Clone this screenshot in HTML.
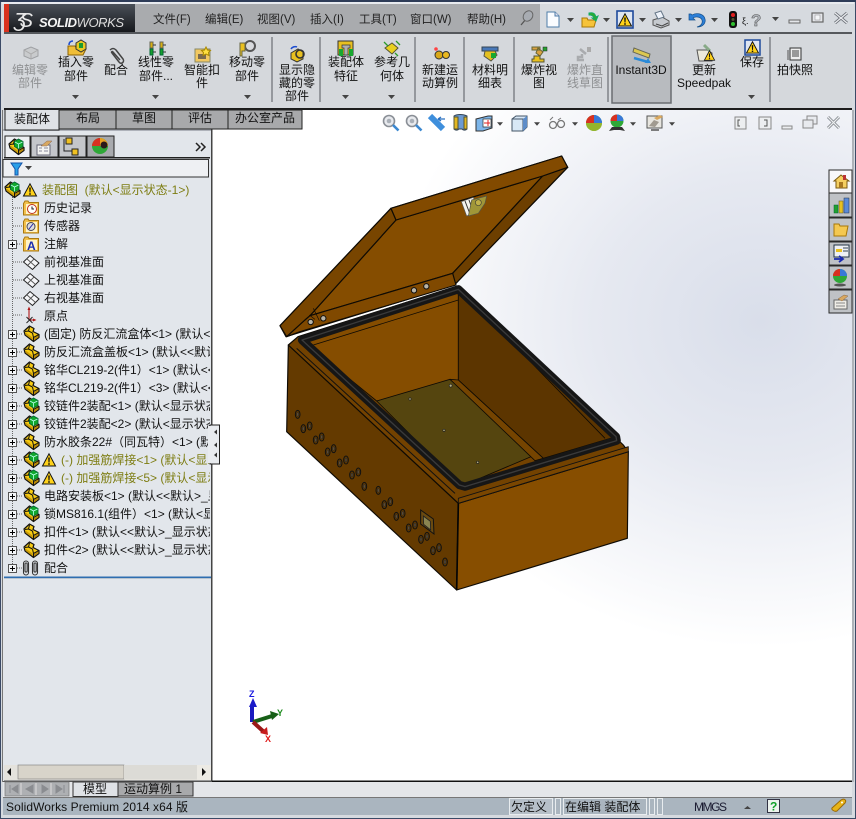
<!DOCTYPE html>
<html><head><meta charset="utf-8"><title>SolidWorks</title>
<style>
html,body{margin:0;padding:0;background:#d8dce2;width:856px;height:819px;overflow:hidden}
svg{display:block;position:absolute;left:0;top:0}
text{font-family:"Liberation Sans","Noto Sans CJK SC",sans-serif;font-size:12px;fill:#111}
.c{text-anchor:middle}
.g{fill:#8e9092}
.m{font-size:11.5px;fill:#222}
.w{fill:#7d7d12}
</style></head><body>
<svg width="856" height="819" viewBox="0 0 856 819" xmlns="http://www.w3.org/2000/svg">
<defs>
<radialGradient id="gv" gradientUnits="userSpaceOnUse" cx="760" cy="320" r="370" gradientTransform="translate(0 40) scale(1 .88)"><stop offset="0" stop-color="#d9deea"/><stop offset=".45" stop-color="#e6e9f1"/><stop offset="1" stop-color="#ffffff"/></radialGradient>
<linearGradient id="log" x1="0" y1="0" x2="0" y2="1"><stop offset="0" stop-color="#4a5058"/><stop offset="1" stop-color="#16181c"/></linearGradient>
<clipPath id="tc"><rect x="3" y="180" width="207" height="396"/></clipPath>
<symbol id="part" viewBox="0 0 17 17" overflow="visible"><path d="M1 6 6.500 1 11 3.500 10 6.500 16 9.500 16 12.500 10.500 16.500 2 10Z" fill="#f6cb14" stroke="#111" stroke-width="1.200" stroke-linejoin="round"/><path d="M6.500 2 5.500 6 9.500 8M2 6.500 5.500 6M9.500 8 10.500 12.500 16 9.500M10.500 12.500V16" fill="none" stroke="#111" stroke-width="1"/><path d="M2.500 7.500 9.800 12.800V15L2.500 9.700Z" fill="#c99a08"/><path d="M11 13 15.500 10.300V12.300L11 15.500Z" fill="#b98a08"/></symbol>
<symbol id="asm" viewBox="0 0 17 17" overflow="visible"><use href="#part" width="17" height="17"/><path d="M6.500 3.500 10.500 1 15 3.500V8.500L10.500 11 6.500 8.500Z" fill="#10a82c" stroke="#063" stroke-width=".9"/><path d="M7 4 10.500 6 14.500 4M10.500 6V10.500" fill="none" stroke="#bfe" stroke-width=".8"/></symbol>
<symbol id="warn" viewBox="0 0 14 14" overflow="visible"><path d="M7 .8 13.500 13H.5Z" fill="#ffd21a" stroke="#111" stroke-width="1"/><path d="M6.200 4.500h1.600L7.500 9.500h-1ZM6.200 10.300h1.600v1.500H6.200Z" fill="#111"/></symbol>
<symbol id="plus" viewBox="0 0 9 9"><rect x=".5" y=".5" width="8" height="8" fill="#f4f6f8" stroke="#555"/><path d="M2 4.500h5M4.500 2v5" stroke="#000"/></symbol>
<symbol id="plane" viewBox="0 0 17 17" overflow="visible"><path d="M.5 8 7 1.500 16 9 9.500 15.500Z" fill="#f6f7f9" stroke="#222"/><path d="M3.500 4.500 12.500 12.500M4 12 11 5" stroke="#555" stroke-width=".9" fill="none"/></symbol>
<symbol id="folder" viewBox="0 0 16 16" overflow="visible"><path d="M.5 3.500V15h15V2.500H6L5 1H2Z" fill="#f2c04c" stroke="#a97810"/><rect x="3" y="4" width="11" height="10" fill="#fff3c8"/></symbol>
<symbol id="mag" viewBox="0 0 18 18" overflow="visible"><circle cx="7" cy="7" r="5.500" fill="#e8eaee" stroke="#8a8f96" stroke-width="1.600"/><circle cx="7" cy="7" r="2.300" fill="#aab0b8"/><path d="M11 11 16.500 16.500" stroke="#3c88d0" stroke-width="2.600"/></symbol>
<symbol id="dd" viewBox="0 0 7 4"><path d="M0 0H7L3.500 4Z" fill="#444"/></symbol>
<symbol id="hole" viewBox="0 0 20 30" overflow="visible"><ellipse cx="10" cy="15" rx="7" ry="12" fill="#5f3800" stroke="#111" stroke-width="3"/><ellipse cx="10" cy="15" rx="3" ry="6" fill="#5a4c38" stroke="#222" stroke-width="1.500"/></symbol>
</defs>

<!-- window frame -->
<rect width="856" height="819" fill="#3b4a66"/>
<rect x="1" y="1" width="854" height="817" fill="#d6dadf"/>
<rect x="0" y="0" width="856" height="2" fill="#2e3c58"/>
<rect x="2" y="2" width="852" height="2" fill="#e8ebef"/>

<!-- title bar -->
<rect x="4" y="4" width="848" height="28" fill="#d6dadf"/>
<rect x="135" y="4" width="405" height="28" fill="#a9abae"/>
<rect x="4" y="4" width="131" height="28" fill="url(#log)"/>
<rect x="4" y="4" width="5" height="28" fill="#d8321e"/>
<text x="14" y="27" style="font-size:20px;font-style:italic;fill:#e8e8e8" textLength="19">ƷS</text>
<text x="39" y="27" style="font-size:13px;font-style:italic;fill:#f0f0f0" textLength="85"><tspan style="font-weight:bold;fill:#f4f4f4">SOLID</tspan><tspan style="fill:#dcdcdc">WORKS</tspan></text>
<text x="153" y="23" class="m">文件(F)</text><text x="205" y="23" class="m">编辑(E)</text><text x="257" y="23" class="m">视图(V)</text><text x="310" y="23" class="m">插入(I)</text><text x="359" y="23" class="m">工具(T)</text><text x="410" y="23" class="m">窗口(W)</text><text x="467" y="23" class="m">帮助(H)</text>
<!-- pushpin -->
<path d="M521 25 526 19" stroke="#555" stroke-width="1.300"/><ellipse cx="528" cy="16" rx="4.500" ry="5.500" transform="rotate(35 528 16)" fill="#a8acb2" stroke="#666"/>
<!-- quick icons -->
<path d="M547 12h8l4 4v11h-12Z" fill="#fafcff" stroke="#4f7da8"/><path d="M555 12v4h4" fill="#dde" stroke="#4f7da8"/>
<use href="#dd" x="567" y="18" width="7" height="4"/>
<path d="M582 18h5l1 2h8l-2 7h-12Z" fill="#f6c33a" stroke="#a87808"/><path d="M589 13c5-1 6 1 7 4l2-1-2 5-4-3 2 0c-1-2-2-3-5-3Z" fill="#2faa2f" stroke="#1a6"/>
<use href="#dd" x="603" y="18" width="7" height="4"/>
<rect x="617" y="11" width="16" height="17" fill="#dfe6f2" stroke="#1e4a9c" stroke-width="1.600"/><use href="#warn" x="618" y="13" width="14" height="14"/>
<use href="#dd" x="639" y="18" width="7" height="4"/>
<path d="M653 20l9-3 7 4v4l-8 3-8-3Z" fill="#c6cacf" stroke="#555"/><path d="M655 13l6-2 3 6-6 2Z" fill="#eef3fa" stroke="#678"/><path d="M656 24l6 2 6-3" stroke="#444" fill="none"/>
<use href="#dd" x="675" y="18" width="7" height="4"/>
<path d="M689 14v6h6l-2-2c3-2 8-1 9 2 1 3-1 6-5 7 6 0 9-4 8-8-1-5-8-7-13-4l-1-1Z" fill="#2c7fd8" stroke="#14508c" stroke-width=".7"/>
<use href="#dd" x="711" y="18" width="7" height="4"/>
<rect x="729" y="11" width="8" height="17" rx="3" fill="#111"/><circle cx="733" cy="15" r="2" fill="#e02020"/><circle cx="733" cy="19.500" r="1.500" fill="#553"/><circle cx="733" cy="24" r="2" fill="#30c030"/>
<text x="742" y="24" style="font-size:9px">ξ.</text>
<text x="751" y="26" style="font-size:17px;font-weight:bold;fill:#aeb3ba;stroke:#555;stroke-width:.5">?</text>
<use href="#dd" x="772" y="17" width="7" height="4"/>
<rect x="789" y="20" width="11" height="3" fill="#e4e6ea" stroke="#666"/>
<rect x="812" y="13" width="11" height="9" fill="#e4e6ea" stroke="#666" stroke-width="1.200"/><rect x="815" y="15" width="5" height="5" fill="#f4f6f8" stroke="#888" stroke-width=".5"/>
<path d="M835 13 847 23M847 13 835 23" stroke="#6a6f76" stroke-width="3"/><path d="M835 13 847 23M847 13 835 23" stroke="#e8eaee" stroke-width="1.300"/>

<!-- command manager -->
<rect x="4" y="32" width="848" height="2" fill="#55585c"/>
<rect x="4" y="34" width="848" height="74" fill="#d5d8dc"/>
<rect x="4" y="108" width="848" height="2" fill="#1c1c1c"/>
<path d="M272 37V102M320 37V102M415 37V102M464 37V102M514 37V102M608 37V102M770 37V102" stroke="#55595e" stroke-width="1"/>
<rect x="612" y="36" width="59" height="67" fill="#b8bbbf" stroke="#6a6d71" stroke-width="1.500"/>

<!-- command icons -->
<path d="M24 50 31 47 38 50V56L31 59 24 56Z" fill="#c9cbcd" stroke="#9ea0a3"/><path d="M24 50 31 54 38 50M31 54V59" stroke="#aaa" fill="none"/>
<path d="M68 46h7l2 3h9l-3 6H68Z" fill="#f0be38" stroke="#8a6206"/><path d="M76 43l5-3 5 3v6l-5 3-5-3Z" fill="#e8c820" stroke="#333"/><path d="M79 43h4v5h-4Z" fill="#1a9a30"/><path d="M69 45c0-3 2-4 4-4" stroke="#1c4cd0" fill="none" stroke-width="1.500"/>
<path d="M110 50c2-2 4-2 6 0l7 9c2 3-2 6-4 3l-7-9c-1-1 0-2 1-1l7 8" fill="none" stroke="#444" stroke-width="1.500"/>
<rect x="150" y="42" width="3" height="6" fill="#d8b010" stroke="#665"/><rect x="160" y="42" width="3" height="6" fill="#d8b010" stroke="#665"/><rect x="150" y="49" width="3" height="6" fill="#16a02c" stroke="#063"/><rect x="160" y="49" width="3" height="6" fill="#16a02c" stroke="#063"/><path d="M153 45h3M163 45h3M153 52h3M163 52h3" stroke="#333"/>
<rect x="195" y="49" width="15" height="13" fill="#f2c860" stroke="#886"/><rect x="198" y="54" width="8" height="5" fill="#7a6a50"/><path d="M206 47l1.500 3 3 .5-2 2 .5 3-3-1.500-3 1.500.5-3-2-2 3-.5Z" fill="#ffe040" stroke="#a80"/>
<circle cx="250" cy="46" r="5" fill="#d8dade" stroke="#555" stroke-width="2"/><path d="M240 43h5v8h-3v5h-2Z" fill="#eac020" stroke="#664"/>
<path d="M291 53l7-4 5 3v7l-6 3-6-3Z" fill="#e8c020" stroke="#333"/><circle cx="300" cy="54" r="4" fill="none" stroke="#333" stroke-width="1.600"/><path d="M291 49c1-2 4-3 6-2" stroke="#1c4cd0" fill="none" stroke-width="1.500"/>
<rect x="338" y="41" width="15" height="14" fill="#e8c020" stroke="#333"/><rect x="339" y="49" width="4" height="7" fill="#18a830"/><rect x="349" y="49" width="4" height="7" fill="#18a830"/><path d="M342 45h8v3h-2v7h-4v-7h-2Z" fill="#b0b0b0" stroke="#333" stroke-width=".7"/>
<path d="M385 48 392 43 398 48 392 54Z" fill="#e8d020" stroke="#553"/><path d="M384 42 388 46M395 53 398 56M396 41 400 45" stroke="#2a9a2a" stroke-width="1.300"/>
<circle cx="439" cy="55" r="4" fill="#d9a818" stroke="#333"/><circle cx="446" cy="55" r="3.500" fill="#e8b820" stroke="#333"/><circle cx="436" cy="49" r="1.800" fill="#f44"/>
<rect x="482" y="47" width="16" height="4" fill="#4878b8" stroke="#345"/><path d="M485 51h10l2 4-6 6-7-5Z" fill="#e4c020" stroke="#554"/><rect x="491" y="53" width="5" height="5" fill="#18a830"/>
<path d="M532 47h8v3h-8ZM538 48l5 4-3 4-4-3Z" fill="#d9a040" stroke="#663"/><rect x="543" y="47" width="4" height="4" fill="#28a030" stroke="#222" stroke-width=".5"/><path d="M534 56h6v3h4v3h-12v-3h2Z" fill="#e8c020" stroke="#553"/>
<path d="M580 49l6 5M584 60h-6v-3h4v-3" fill="none" stroke="#a9abae" stroke-width="2.500"/><rect x="587" y="47" width="4" height="5" fill="#aaa"/>
<path d="M634 48 650 54 649 58 633 52Z" fill="#dcc850" stroke="#665"/><path d="M634 58l14 4" stroke="#2a8ad8" stroke-width="2.500"/><path d="M648 58l3 5-6 0Z" fill="#2a8ad8"/>
<path d="M697 50h10l5 3v8h-13Z" fill="#eceadc" stroke="#555"/><path d="M704 45l6 6" stroke="#8a8" stroke-width="3"/><use href="#warn" x="704" y="50" width="11" height="11"/>
<rect x="745" y="40" width="15" height="15" fill="#dfe6f2" stroke="#1e4a9c" stroke-width="1.500"/><use href="#warn" x="746" y="41" width="13" height="13"/>
<rect x="790" y="48" width="11" height="12" fill="#eee" stroke="#333"/><rect x="792" y="50" width="7" height="7" fill="#999"/><path d="M788 50v10" stroke="#555"/>

<!-- command labels -->
<text x="30" y="74" class="c g">编辑零</text><text x="30" y="87" class="c g">部件</text>
<text x="585" y="74" class="c g">爆炸直</text><text x="585" y="87" class="c g">线草图</text>
<text x="76" y="66" class="c">插入零</text><text x="76" y="80" class="c">部件</text>
<text x="116" y="74" class="c">配合</text>
<text x="156" y="66" class="c">线性零</text><text x="156" y="80" class="c">部件...</text>
<text x="202" y="74" class="c">智能扣</text><text x="202" y="87" class="c">件</text>
<text x="247" y="66" class="c">移动零</text><text x="247" y="80" class="c">部件</text>
<text x="297" y="74" class="c">显示隐</text><text x="297" y="87" class="c">藏的零</text><text x="297" y="100" class="c">部件</text>
<text x="346" y="66" class="c">装配体</text><text x="346" y="80" class="c">特征</text>
<text x="392" y="66" class="c">参考几</text><text x="392" y="80" class="c">何体</text>
<text x="440" y="74" class="c">新建运</text><text x="440" y="87" class="c">动算例</text>
<text x="490" y="74" class="c">材料明</text><text x="490" y="87" class="c">细表</text>
<text x="539" y="74" class="c">爆炸视</text><text x="539" y="87" class="c">图</text>
<text x="641" y="74" class="c">Instant3D</text>
<text x="704" y="74" class="c">更新</text><text x="704" y="87" class="c">Speedpak</text>
<text x="752" y="66" class="c">保存</text>
<text x="795" y="74" class="c">拍快照</text>
<use href="#dd" x="72" y="95" width="7" height="4"/><use href="#dd" x="152" y="95" width="7" height="4"/><use href="#dd" x="244" y="95" width="7" height="4"/><use href="#dd" x="342" y="95" width="7" height="4"/><use href="#dd" x="388" y="95" width="7" height="4"/><use href="#dd" x="748" y="95" width="7" height="4"/>

<!-- graphics area -->
<rect x="212" y="110" width="640" height="671" fill="url(#gv)"/>
<rect x="852" y="110" width="2" height="672" fill="#aeb2b8"/>

<!-- view toolbar -->
<use href="#mag" x="382" y="114" width="18" height="18"/><use href="#mag" x="405" y="114" width="18" height="18"/>
<path d="M430 116 443 129" stroke="#3f8fdc" stroke-width="6"/><path d="M438 119h7M438 119l3-2M438 119l3 2" stroke="#2a70c0" stroke-width="1.300"/>
<path d="M454 116c3-2 9-2 13 0v13c-2 2-4 1-5 0h-3c-1 1-3 2-5 0Z" fill="#6c9ad2" stroke="#345"/><path d="M454 117h4v12h-4ZM464 117h3v12h-3Z" fill="#e4b820" stroke="#553"/>
<path d="M476 119l12-3 4 0v12l-9 3h-7Z" fill="#7db6ea" stroke="#333"/><path d="M483 119h8v8h-8Z" fill="#fff" stroke="#333" stroke-width=".7"/><path d="M484 123h6M488 120v6" stroke="#d22" stroke-width="1"/>
<use href="#dd" x="497" y="122" width="6" height="4"/>
<path d="M512 119l4-3h11v11l-4 4h-11Z" fill="#d8e8f6" stroke="#456"/><path d="M512 119h11v12" fill="none" stroke="#456"/><path d="M523 119l4-3v11l-4 4Z" fill="#5c8cc8"/>
<use href="#dd" x="534" y="122" width="6" height="4"/>
<circle cx="553" cy="125" r="3.500" fill="none" stroke="#777" stroke-width="1.300"/><circle cx="561" cy="124" r="3.500" fill="none" stroke="#777" stroke-width="1.300"/><path d="M550 120l3-3M558 120l3-2" stroke="#777"/>
<use href="#dd" x="572" y="122" width="6" height="4"/>
<circle cx="594" cy="123" r="8" fill="#2fa838"/><path d="M594 123V115A8 8 0 0 0 586 123Z" fill="#d83020"/><path d="M594 123V115A8 8 0 0 1 602 123Z" fill="#3878d8"/><path d="M586 123A8 8 0 0 0 602 123Z" fill="#e8c020" opacity=".55"/>
<circle cx="617" cy="121" r="6.500" fill="#2fa838"/><path d="M617 121V114.500A6.500 6.500 0 0 0 610.500 121Z" fill="#d83020"/><path d="M617 121V114.500A6.500 6.500 0 0 1 623.500 121Z" fill="#3878d8"/><path d="M609 131l3-4h10l3 4-5-1h-6Z" fill="#333"/>
<use href="#dd" x="630" y="122" width="6" height="4"/>
<rect x="647" y="116" width="15" height="12" fill="#e8e6e0" stroke="#555"/><path d="M649 126l5-6 5 2-4 5Z" fill="#a09a90"/><path d="M654 118l6-3 3 2-6 3Z" fill="#d8a860"/><path d="M651 130h8" stroke="#555" stroke-width="1.500"/>
<use href="#dd" x="669" y="122" width="6" height="4"/>
<rect x="735" y="117" width="11" height="12" fill="#eceef0" stroke="#888"/><path d="M740 120h-2v6h2" stroke="#555" fill="none"/>
<rect x="759" y="117" width="12" height="12" fill="#eceef0" stroke="#888"/><path d="M764 120h3v6h-3" stroke="#555" fill="none"/>
<rect x="782" y="126" width="10" height="3" fill="#eceef0" stroke="#888"/>
<rect x="807" y="116" width="10" height="8" fill="#e8eaee" stroke="#888"/><rect x="803" y="120" width="10" height="8" fill="#e8eaee" stroke="#888"/>
<path d="M828 117 839 128M839 117 828 128" stroke="#8a8e94" stroke-width="3"/><path d="M828 117 839 128M839 117 828 128" stroke="#eef0f2" stroke-width="1.200"/>

<!-- lid -->
<g transform="translate(270 150) scale(.33333)" stroke="#0e0a04" stroke-linejoin="round" stroke-width="3.500">
<path d="M363 175 875 18 893 52 553 405 48 560 30 527Z" fill="#7d4700"/>
<path d="M378 210 818 78 548 370 120 497Z" fill="#854d00"/>
<path d="M363 175 378 210 120 497 105 510 50 560 30 527Z" fill="#784500"/>
<path d="M818 78 893 52 553 405 548 370Z" fill="#6d3f00"/>
<path d="M363 175 875 18 893 52 818 78 378 210Z" fill="#824a00"/>
<path d="M120 497 548 370 558 405 90 545 50 560 105 510Z" fill="#804900"/>
<path d="M130 475 148 512M118 495 135 508" stroke-width="2" fill="none"/>
<g fill="#b8b4a8" stroke="#111" stroke-width="3"><circle cx="122" cy="516" r="8"/><circle cx="160" cy="505" r="8"/><circle cx="432" cy="421" r="8"/><circle cx="469" cy="409" r="8"/></g>
<path d="M574 155 610 142 625 182 590 198Z" fill="#f4f4f0" stroke="#555" stroke-width="2"/>
<path d="M585 153 600 192M597 150 610 185" stroke="#333" stroke-width="3"/>
<path d="M605 150 650 138 645 160 625 190 595 198Z" fill="#a09638" stroke="#554" stroke-width="2"/><circle cx="625" cy="158" r="9" fill="#c0b048" stroke="#443" stroke-width="2"/>
</g>

<!-- box -->
<g transform="translate(280 330) scale(.33333)" stroke="#0e0a04" stroke-linejoin="round" stroke-width="3.500">
<path d="M25 45 535 520 530 780 20 305Z" fill="#643a00"/>
<path d="M535 520 1045 365 1042 625 530 780Z" fill="#874e00"/>
<path d="M25 45 54 20 535 -132 1030 345 1045 365 535 520Z" fill="#734200"/>
<!-- interior -->
<path d="M66 30 535 -122 535 150 290 213 Z" fill="#854d00" stroke-width="2.500"/>
<path d="M535 -122 1008 320 790 385 535 150Z" fill="#5c3500" stroke-width="2.500"/>
<path d="M100 45 535 -90M620 -40 975 325" fill="none" stroke-width="2.500"/>
<path d="M290 213 510 148 765 375 545 468 Z" fill="#55450f" stroke-width="2.500"/>
<path d="M510 148 535 150 790 385 765 392 Z" fill="#754400" stroke-width="2.500"/>
<g fill="#b5ad80" stroke="#222" stroke-width="2"><circle cx="390" cy="207" r="3.500"/><circle cx="512" cy="167" r="4.500"/><circle cx="492" cy="301" r="3.500"/><circle cx="593" cy="397" r="3.500"/></g>
<!-- gasket -->
<path d="M66 30 535 -122 1008 320 1010 332 555 470 538 465Z" fill="none" stroke="#161616" stroke-width="25"/>
<path d="M66 30 535 -122 1008 320 1010 332 555 470 538 465Z" fill="none" stroke="#3a3a3a" stroke-width="4"/>
<!-- front rim -->
<path d="M535 505 1045 350 1045 365 535 520Z" fill="#7a4600" stroke="#111" stroke-width="2.500"/>
<path d="M50 55 525 490" fill="none" stroke="#111" stroke-width="3"/>
<path d="M535 520 530 780" stroke="#050505" stroke-width="5"/>
</g>
<g transform="translate(280 330) scale(.33333)">
<use href="#hole" x="43" y="238" width="20" height="30"/><use href="#hole" x="60" y="281" width="20" height="30"/><use href="#hole" x="79" y="273" width="20" height="30"/><use href="#hole" x="97" y="315" width="20" height="30"/><use href="#hole" x="115" y="306" width="20" height="30"/><use href="#hole" x="133" y="351" width="20" height="30"/><use href="#hole" x="151" y="341" width="20" height="30"/><use href="#hole" x="169" y="384" width="20" height="30"/><use href="#hole" x="188" y="375" width="20" height="30"/><use href="#hole" x="206" y="420" width="20" height="30"/><use href="#hole" x="225" y="411" width="20" height="30"/><use href="#hole" x="243" y="454" width="20" height="30"/><use href="#hole" x="285" y="466" width="20" height="30"/><use href="#hole" x="303" y="509" width="20" height="30"/><use href="#hole" x="321" y="500" width="20" height="30"/><use href="#hole" x="339" y="544" width="20" height="30"/><use href="#hole" x="358" y="535" width="20" height="30"/><use href="#hole" x="376" y="579" width="20" height="30"/><use href="#hole" x="395" y="570" width="20" height="30"/><use href="#hole" x="413" y="613" width="20" height="30"/><use href="#hole" x="431" y="604" width="20" height="30"/><use href="#hole" x="449" y="647" width="20" height="30"/><use href="#hole" x="467" y="638" width="20" height="30"/><use href="#hole" x="485" y="681" width="20" height="30"/>
<path d="M422 540 460 567 462 612 422 582Z" fill="#6a4a10" stroke="#111" stroke-width="3"/><path d="M430 558 451 574 452 600 431 583Z" fill="#8a8450" stroke="#222" stroke-width="2.500"/>
</g>

<!-- triad -->
<path d="M252 722V705" stroke="#1a1ac0" stroke-width="4"/><path d="M249 707 253 698 257 707Z" fill="#1a1ac8"/>
<path d="M253 722 272 716" stroke="#176017" stroke-width="4"/><path d="M270 711 279 714 272 720Z" fill="#176017"/>
<path d="M253 722 264 732" stroke="#9a1818" stroke-width="4"/><path d="M260 733 268 735 267 727Z" fill="#c81c1c"/>
<text x="249" y="697" style="font-size:9px;font-weight:bold;fill:#1a1ae0">Z</text>
<text x="277" y="716" style="font-size:9px;font-weight:bold;fill:#1a8a1a">Y</text>
<text x="265" y="742" style="font-size:9px;font-weight:bold;fill:#e01a1a">X</text>

<!-- task pane tabs -->
<g stroke="#2a2a2a" stroke-width="1">
<rect x="829" y="170" width="23" height="23" fill="#f8f8fa"/>
<rect x="829" y="193" width="23" height="24" fill="#bfc2c6"/>
<rect x="829" y="218" width="23" height="23" fill="#bfc2c6"/>
<rect x="829" y="242" width="23" height="23" fill="#bfc2c6"/>
<rect x="829" y="266" width="23" height="23" fill="#bfc2c6"/>
<rect x="829" y="290" width="23" height="23" fill="#bfc2c6"/>
</g>
<path d="M834 181 841 175 849 181H847V188H836V181Z" fill="#f5cf60" stroke="#7a5a10"/><rect x="843" y="175" width="3" height="5" fill="#b33"/><rect x="839" y="182" width="4" height="6" fill="#a87820"/>
<rect x="834" y="205" width="4" height="8" fill="#20a030" stroke="#063" stroke-width=".5"/><rect x="839" y="201" width="4" height="12" fill="#e8c020" stroke="#553" stroke-width=".5"/><rect x="844" y="198" width="5" height="15" fill="#5a8ad8" stroke="#234" stroke-width=".5"/>
<path d="M834 224h5l1 2h8l-2 10h-12Z" fill="#f4c850" stroke="#a87808"/>
<rect x="834" y="245" width="15" height="12" fill="#eef0f4" stroke="#234"/><rect x="836" y="249" width="6" height="3" fill="#e8c020"/><path d="M843 248h5M843 251h5" stroke="#345"/><path d="M834 259h8M839 256l4 3-4 3" stroke="#1a2ab0" stroke-width="1.800" fill="none"/>
<circle cx="840" cy="276" r="7" fill="#2fa838"/><path d="M840 276V269A7 7 0 0 0 833 276Z" fill="#d83020"/><path d="M840 276V269A7 7 0 0 1 847 276Z" fill="#3878d8"/><ellipse cx="840" cy="285" rx="6" ry="1.500" fill="#555"/>
<path d="M834 300h13v9h-13Z" fill="#eeece6" stroke="#666"/><path d="M838 299l6-4 4 1-6 5Z" fill="#d8a860" stroke="#864" stroke-width=".5"/><path d="M836 303h9M836 306h9" stroke="#888"/>

<!-- left panel -->
<rect x="3" y="129" width="208" height="652" fill="#e2e6eb"/>
<rect x="211" y="110" width="1.500" height="671" fill="#444"/>
<rect x="3" y="129" width="208" height="2" fill="#aeb2ba"/>
<rect x="2" y="110" width="1" height="672" fill="#777"/>

<!-- tabs -->
<rect x="59" y="110" width="57" height="19" fill="#a8a9ab" stroke="#222"/>
<rect x="116" y="110" width="56" height="19" fill="#a8a9ab" stroke="#222"/>
<rect x="172" y="110" width="56" height="19" fill="#a8a9ab" stroke="#222"/>
<rect x="228" y="110" width="74" height="19" fill="#a8a9ab" stroke="#222"/>
<path d="M5 110V130H59V110" fill="#dfe2e6" stroke="#222"/>
<text x="32" y="123" class="c">装配体</text><text x="88" y="122" class="c">布局</text><text x="144" y="122" class="c">草图</text><text x="200" y="122" class="c">评估</text><text x="265" y="122" class="c">办公室产品</text>

<!-- FM tabs -->
<rect x="4" y="157" width="206" height="1.500" fill="#222"/>
<path d="M5 157V136H30V157" fill="#eef0f3" stroke="#222"/>
<rect x="31" y="136" width="27" height="21" fill="#c4c6ca" stroke="#222"/><rect x="59" y="136" width="27" height="21" fill="#c4c6ca" stroke="#222"/><rect x="87" y="136" width="27" height="21" fill="#a8aaae" stroke="#222"/>
<use href="#asm" x="8" y="138" width="17" height="17"/>
<rect x="37" y="145" width="13" height="10" fill="#f4f4f2" stroke="#667"/><path d="M39 148h3M39 151h3M44 148h4M44 151h4" stroke="#889"/><path d="M41 146l6-5 5 0-5 5Z" fill="#d8a860" stroke="#865" stroke-width=".5"/>
<path d="M66 139h6v6h-6ZM72 150h6v6h-6Z" fill="#f0c020" stroke="#222" transform="translate(0 -1)"/><path d="M64 139v12h8" stroke="#222" fill="none"/>
<circle cx="100" cy="146" r="8" fill="#2fa838"/><path d="M100 146V138A8 8 0 0 0 92 146Z" fill="#d83020"/><path d="M100 146V138A8 8 0 0 1 108 146Z" fill="#e8a020"/><circle cx="104" cy="145" r="3.500" fill="#2a1a1a"/>
<path d="M196 143 200 147 196 151M201 143 205 147 201 151" fill="none" stroke="#222" stroke-width="1.500"/>

<!-- filter -->
<rect x="3" y="159.500" width="205.500" height="17.500" fill="#eef0f3" stroke="#333"/>
<path d="M11 163H22L18 169V175H15V169Z" fill="#2aa0e8" stroke="#1252a8"/>
<path d="M25 166H32L28.500 170Z" fill="#444"/>

<!-- tree lines -->
<g stroke="#666" stroke-dasharray="1 1" fill="none">
<path d="M12.500 197V566"/>
<path d="M13 208H23M13 226H23M13 262H23M13 280H23M13 298H23M13 315H23M17 244H23M17 334H23M17 352H23M17 370H23M17 388H23M17 406H23M17 424H23M17 442H23M17 460H23M17 478H23M17 496H23M17 514H23M17 532H23M17 550H23M17 568H23"/>
</g>
<use href="#plus" x="8" y="240" width="9" height="9"/>
<use href="#plus" x="8" y="330" width="9" height="9"/><use href="#plus" x="8" y="348" width="9" height="9"/><use href="#plus" x="8" y="366" width="9" height="9"/><use href="#plus" x="8" y="384" width="9" height="9"/><use href="#plus" x="8" y="402" width="9" height="9"/><use href="#plus" x="8" y="420" width="9" height="9"/><use href="#plus" x="8" y="438" width="9" height="9"/><use href="#plus" x="8" y="456" width="9" height="9"/><use href="#plus" x="8" y="474" width="9" height="9"/><use href="#plus" x="8" y="492" width="9" height="9"/><use href="#plus" x="8" y="510" width="9" height="9"/><use href="#plus" x="8" y="528" width="9" height="9"/><use href="#plus" x="8" y="546" width="9" height="9"/><use href="#plus" x="8" y="564" width="9" height="9"/>

<!-- tree icons -->
<use href="#asm" x="4" y="181" width="17" height="17"/><use href="#warn" x="23" y="183" width="14" height="14"/>
<use href="#folder" x="23" y="200" width="16" height="16"/><circle cx="32" cy="209" r="4.500" fill="#fff" stroke="#c03018"/><path d="M32 206.500V209H34" stroke="#222" fill="none"/>
<use href="#folder" x="23" y="218" width="16" height="16"/><circle cx="31" cy="226.500" r="4" fill="#ddd" stroke="#445"/><path d="M29 229 33 224" stroke="#22a"/>
<use href="#folder" x="23" y="236" width="16" height="16"/><text x="27" y="250" style="font-size:12px;font-weight:bold;fill:#1c2cb0">A</text>
<use href="#plane" x="23" y="254" width="17" height="17"/><use href="#plane" x="23" y="272" width="17" height="17"/><use href="#plane" x="23" y="290" width="17" height="17"/>
<path d="M29 308V320M29 320H35" stroke="#b01818" stroke-width="1.100"/><path d="M27.500 310 29 306.500 30.500 310ZM33 318.500 36.500 320 33 321.500Z" fill="#b01818"/><path d="M26 322 32 316M26 316 32 322" stroke="#222" stroke-width=".9" transform="translate(.5 1)"/>
<use href="#part" x="23" y="325" width="17" height="17"/><use href="#part" x="23" y="343" width="17" height="17"/><use href="#part" x="23" y="361" width="17" height="17"/><use href="#part" x="23" y="379" width="17" height="17"/>
<use href="#asm" x="23" y="397" width="17" height="17"/><use href="#asm" x="23" y="415" width="17" height="17"/><use href="#part" x="23" y="433" width="17" height="17"/>
<use href="#asm" x="23" y="451" width="17" height="17"/><use href="#warn" x="42" y="453" width="14" height="14"/><use href="#asm" x="23" y="469" width="17" height="17"/><use href="#warn" x="42" y="471" width="14" height="14"/>
<use href="#part" x="23" y="487" width="17" height="17"/><use href="#asm" x="23" y="505" width="17" height="17"/><use href="#part" x="23" y="523" width="17" height="17"/><use href="#part" x="23" y="541" width="17" height="17"/>
<g fill="none" stroke="#333" stroke-width="1.100"><rect x="23.500" y="561" width="5" height="14" rx="2.500"/><rect x="25" y="563" width="2.200" height="9" rx="1"/><rect x="32.500" y="561" width="5" height="14" rx="2.500"/><rect x="34" y="563" width="2.200" height="9" rx="1"/></g>

<!-- tree text -->
<g clip-path="url(#tc)">
<text x="42" y="194" class="w">装配图&#160; (默认&lt;显示状态-1&gt;)</text>
<text x="44" y="212">历史记录</text>
<text x="44" y="230">传感器</text>
<text x="44" y="248">注解</text>
<text x="44" y="266">前视基准面</text>
<text x="44" y="284">上视基准面</text>
<text x="44" y="302">右视基准面</text>
<text x="44" y="320">原点</text>
<text x="44" y="338">(固定) 防反汇流盒体&lt;1&gt; (默认&lt;</text>
<text x="44" y="356">防反汇流盒盖板&lt;1&gt; (默认&lt;&lt;默认</text>
<text x="44" y="374">铭华CL219-2(件1）&lt;1&gt; (默认&lt;&lt;默</text>
<text x="44" y="392">铭华CL219-2(件1）&lt;3&gt; (默认&lt;&lt;默</text>
<text x="44" y="410">铰链件2装配&lt;1&gt; (默认&lt;显示状态</text>
<text x="44" y="428">铰链件2装配&lt;2&gt; (默认&lt;显示状态</text>
<text x="44" y="446">防水胶条22#（同瓦特）&lt;1&gt; (默认</text>
<text x="61" y="464" class="w">(-) 加强筋焊接&lt;1&gt; (默认&lt;显示</text>
<text x="61" y="482" class="w">(-) 加强筋焊接&lt;5&gt; (默认&lt;显示</text>
<text x="44" y="500">电路安装板&lt;1&gt; (默认&lt;&lt;默认&gt;_显示</text>
<text x="44" y="518">锁MS816.1(组件）&lt;1&gt; (默认&lt;显示</text>
<text x="44" y="536">扣件&lt;1&gt; (默认&lt;&lt;默认&gt;_显示状态</text>
<text x="44" y="554">扣件&lt;2&gt; (默认&lt;&lt;默认&gt;_显示状态</text>
<text x="44" y="572">配合</text>
</g>
<rect x="4" y="576.500" width="207" height="1.500" fill="#2f6eb0"/>
<rect x="4" y="578" width="207" height="1" fill="#b8c4d0"/>

<!-- collapse handle -->
<path d="M210 425H219.500V464H210Z" fill="#e8ebef" stroke="#222"/>
<rect x="208" y="426" width="4" height="37" fill="#e8ebef"/>
<path d="M214 432 217 429.500V434.500ZM214 445 217 442.500V447.500ZM214 455 217 452.500V457.500Z" fill="#333"/>

<!-- h scrollbar -->
<rect x="4" y="765" width="207" height="15" fill="#e4e2dc"/>
<rect x="18" y="765" width="106" height="14" fill="#d8d4ca" stroke="#888" stroke-width=".7"/>
<rect x="124" y="765" width="73" height="14" fill="#dcdbd6"/>
<rect x="197" y="765" width="14" height="15" fill="#eceae4"/>
<path d="M7 772 11 768V776ZM206 772 202 768V776Z" fill="#111"/>
<rect x="4" y="780" width="207" height="1" fill="#999"/>

<!-- lower tab strip -->
<rect x="3" y="781" width="849" height="16" fill="#e4e6e9"/>
<rect x="212" y="780.500" width="640" height="1.500" fill="#111"/>
<rect x="3" y="781" width="209" height="1" fill="#555"/>
<rect x="5" y="782" width="64" height="14" fill="#aeb0b3" stroke="#777" stroke-width=".7"/>
<path d="M21 783v12M36 783v12M51 783v12" stroke="#ddd"/>
<path d="M10 785v8M18 785 12 789 18 793ZM33 785 26 789 33 793ZM42 785 48 789 42 793ZM64 785v8M56 785 62 789 56 793Z" fill="#8a8c90" stroke="#8a8c90"/>
<rect x="73" y="782" width="45" height="14.500" fill="#dfe2e6" stroke="#333"/>
<rect x="118" y="782" width="75" height="14" fill="#a8a9ab" stroke="#333"/>
<text x="95" y="793" class="c">模型</text><text x="124" y="793">运动算例 1</text>

<!-- status bar -->
<rect x="3" y="797" width="849" height="1.500" fill="#777"/>
<rect x="3" y="798" width="849" height="17" fill="#aab5bf"/>
<text x="6" y="811" textLength="182">SolidWorks Premium 2014 x64 版</text>
<g fill="none" stroke="#e8ecef" stroke-width="1">
<rect x="509.500" y="798.500" width="43" height="16"/>
<rect x="555.500" y="798.500" width="5" height="16"/>
<rect x="563.500" y="798.500" width="83" height="16"/>
<rect x="649.500" y="798.500" width="5" height="16"/>
<rect x="657.500" y="798.500" width="5" height="16"/>
</g>
<rect x="510" y="799" width="42" height="15" fill="#b6bfc8"/>
<text x="511" y="811">欠定义</text>
<text x="565" y="811">在编辑 装配体</text>
<text x="694" y="811" textLength="33" style="fill:#1a1a30">MMGS</text>
<path d="M744 809h7l-3.500-3Z" fill="#444"/>
<rect x="767.500" y="799.500" width="12" height="13" fill="#eef4ee" stroke="#334"/>
<text x="770" y="810.500" style="font-size:12px;font-weight:bold;fill:#10a028">?</text>
<path d="M832 808 841 800c3-2 6 0 4 3l-8 8c-2 1-6-1-5-3Z" fill="#e8b418" stroke="#9a6a08"/><circle cx="842" cy="802.500" r="1" fill="#fff"/>
</svg>
</body></html>
